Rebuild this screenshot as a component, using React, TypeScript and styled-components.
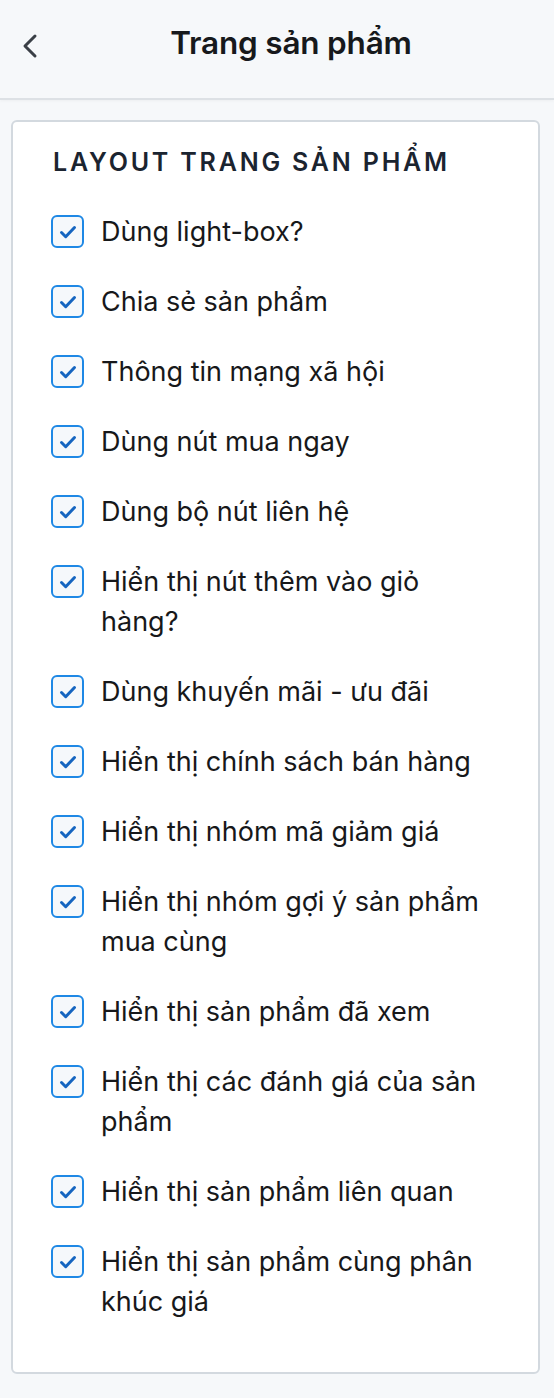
import React from 'react'
import styled, { createGlobalStyle } from 'styled-components'

const GlobalStyle = createGlobalStyle`
  body {
    margin: 0;
    background: #f6f8fa;
    font-family: Inter, "Noto Sans", sans-serif;
    color: #1c1c1e;
  }
`

const Page = styled.div`
  min-height: 1398px;
  background: #f6f8fa;
`

const Header = styled.header`
  position: relative;
  height: 100px;
  display: flex;
  align-items: center;
  justify-content: center;
  background: #f6f8fa;
  border-bottom: 2px solid #dde1e5;
  box-sizing: border-box;
  box-shadow: 0 1px 3px rgba(0, 0, 0, 0.04);
`

const BackButton = styled.button`
  position: absolute;
  left: 14px;
  top: 30px;
  width: 32px;
  height: 32px;
  padding: 0;
  border: none;
  background: none;
  display: flex;
  align-items: center;
  justify-content: center;
  color: #3a3f46;
`

const Title = styled.h1`
  margin: 0 0 14px 28px;
  font-size: 31.5px;
  font-weight: 600;
  color: #17191c;
  letter-spacing: -0.2px;
`

const Card = styled.section`
  margin: 20px 14px 0 11px;
  background: #fff;
  border: 2px solid #d3d9df;
  border-radius: 6px;
  padding: 22px 40px 50px 38px;
`

const SectionTitle = styled.h2`
  margin: 0 0 32px 2px;
  font-size: 25px;
  font-weight: 600;
  letter-spacing: 2.8px;
  text-transform: uppercase;
  color: #1b2430;
  line-height: 36px;
`

const List = styled.div`
  display: flex;
  flex-direction: column;
  gap: 30px;
`

const Row = styled.label`
  display: flex;
  align-items: flex-start;
  gap: 17px;
`

const Box = styled.span`
  flex: none;
  width: 33px;
  height: 33px;
  margin-top: 3px;
  box-sizing: border-box;
  border: 2px solid #1e88e5;
  border-radius: 6px;
  background: #f5f8fb;
  display: flex;
  align-items: center;
  justify-content: center;
`

const Label = styled.span`
  font-size: 27px;
  line-height: 40px;
  color: #17181a;
`

const items = [
  'Dùng light-box?',
  'Chia sẻ sản phẩm',
  'Thông tin mạng xã hội',
  'Dùng nút mua ngay',
  'Dùng bộ nút liên hệ',
  'Hiển thị nút thêm vào giỏ hàng?',
  'Dùng khuyến mãi - ưu đãi',
  'Hiển thị chính sách bán hàng',
  'Hiển thị nhóm mã giảm giá',
  'Hiển thị nhóm gợi ý sản phẩm mua cùng',
  'Hiển thị sản phẩm đã xem',
  'Hiển thị các đánh giá của sản phẩm',
  'Hiển thị sản phẩm liên quan',
  'Hiển thị sản phẩm cùng phân khúc giá',
]

function Check() {
  return (
    <svg width="20" height="20" viewBox="0 0 20 20" fill="none">
      <path d="M3.5 10.5l4.2 4.2L16.5 5.5" stroke="#1565c0" strokeWidth="3" strokeLinecap="round" strokeLinejoin="round" />
    </svg>
  )
}

export default function App() {
  return (
    <Page>
      <GlobalStyle />
      <Header>
        <BackButton aria-label="Quay lại">
          <svg width="24" height="26" viewBox="0 0 24 26" fill="none">
            <path d="M17 3L7 13l10 10" stroke="currentColor" strokeWidth="3" strokeLinecap="round" strokeLinejoin="round" />
          </svg>
        </BackButton>
        <Title>Trang sản phẩm</Title>
      </Header>
      <Card>
        <SectionTitle>Layout trang sản phẩm</SectionTitle>
        <List>
          {items.map((text) => (
            <Row key={text}>
              <Box>
                <Check />
              </Box>
              <Label>{text}</Label>
            </Row>
          ))}
        </List>
      </Card>
    </Page>
  )
}
